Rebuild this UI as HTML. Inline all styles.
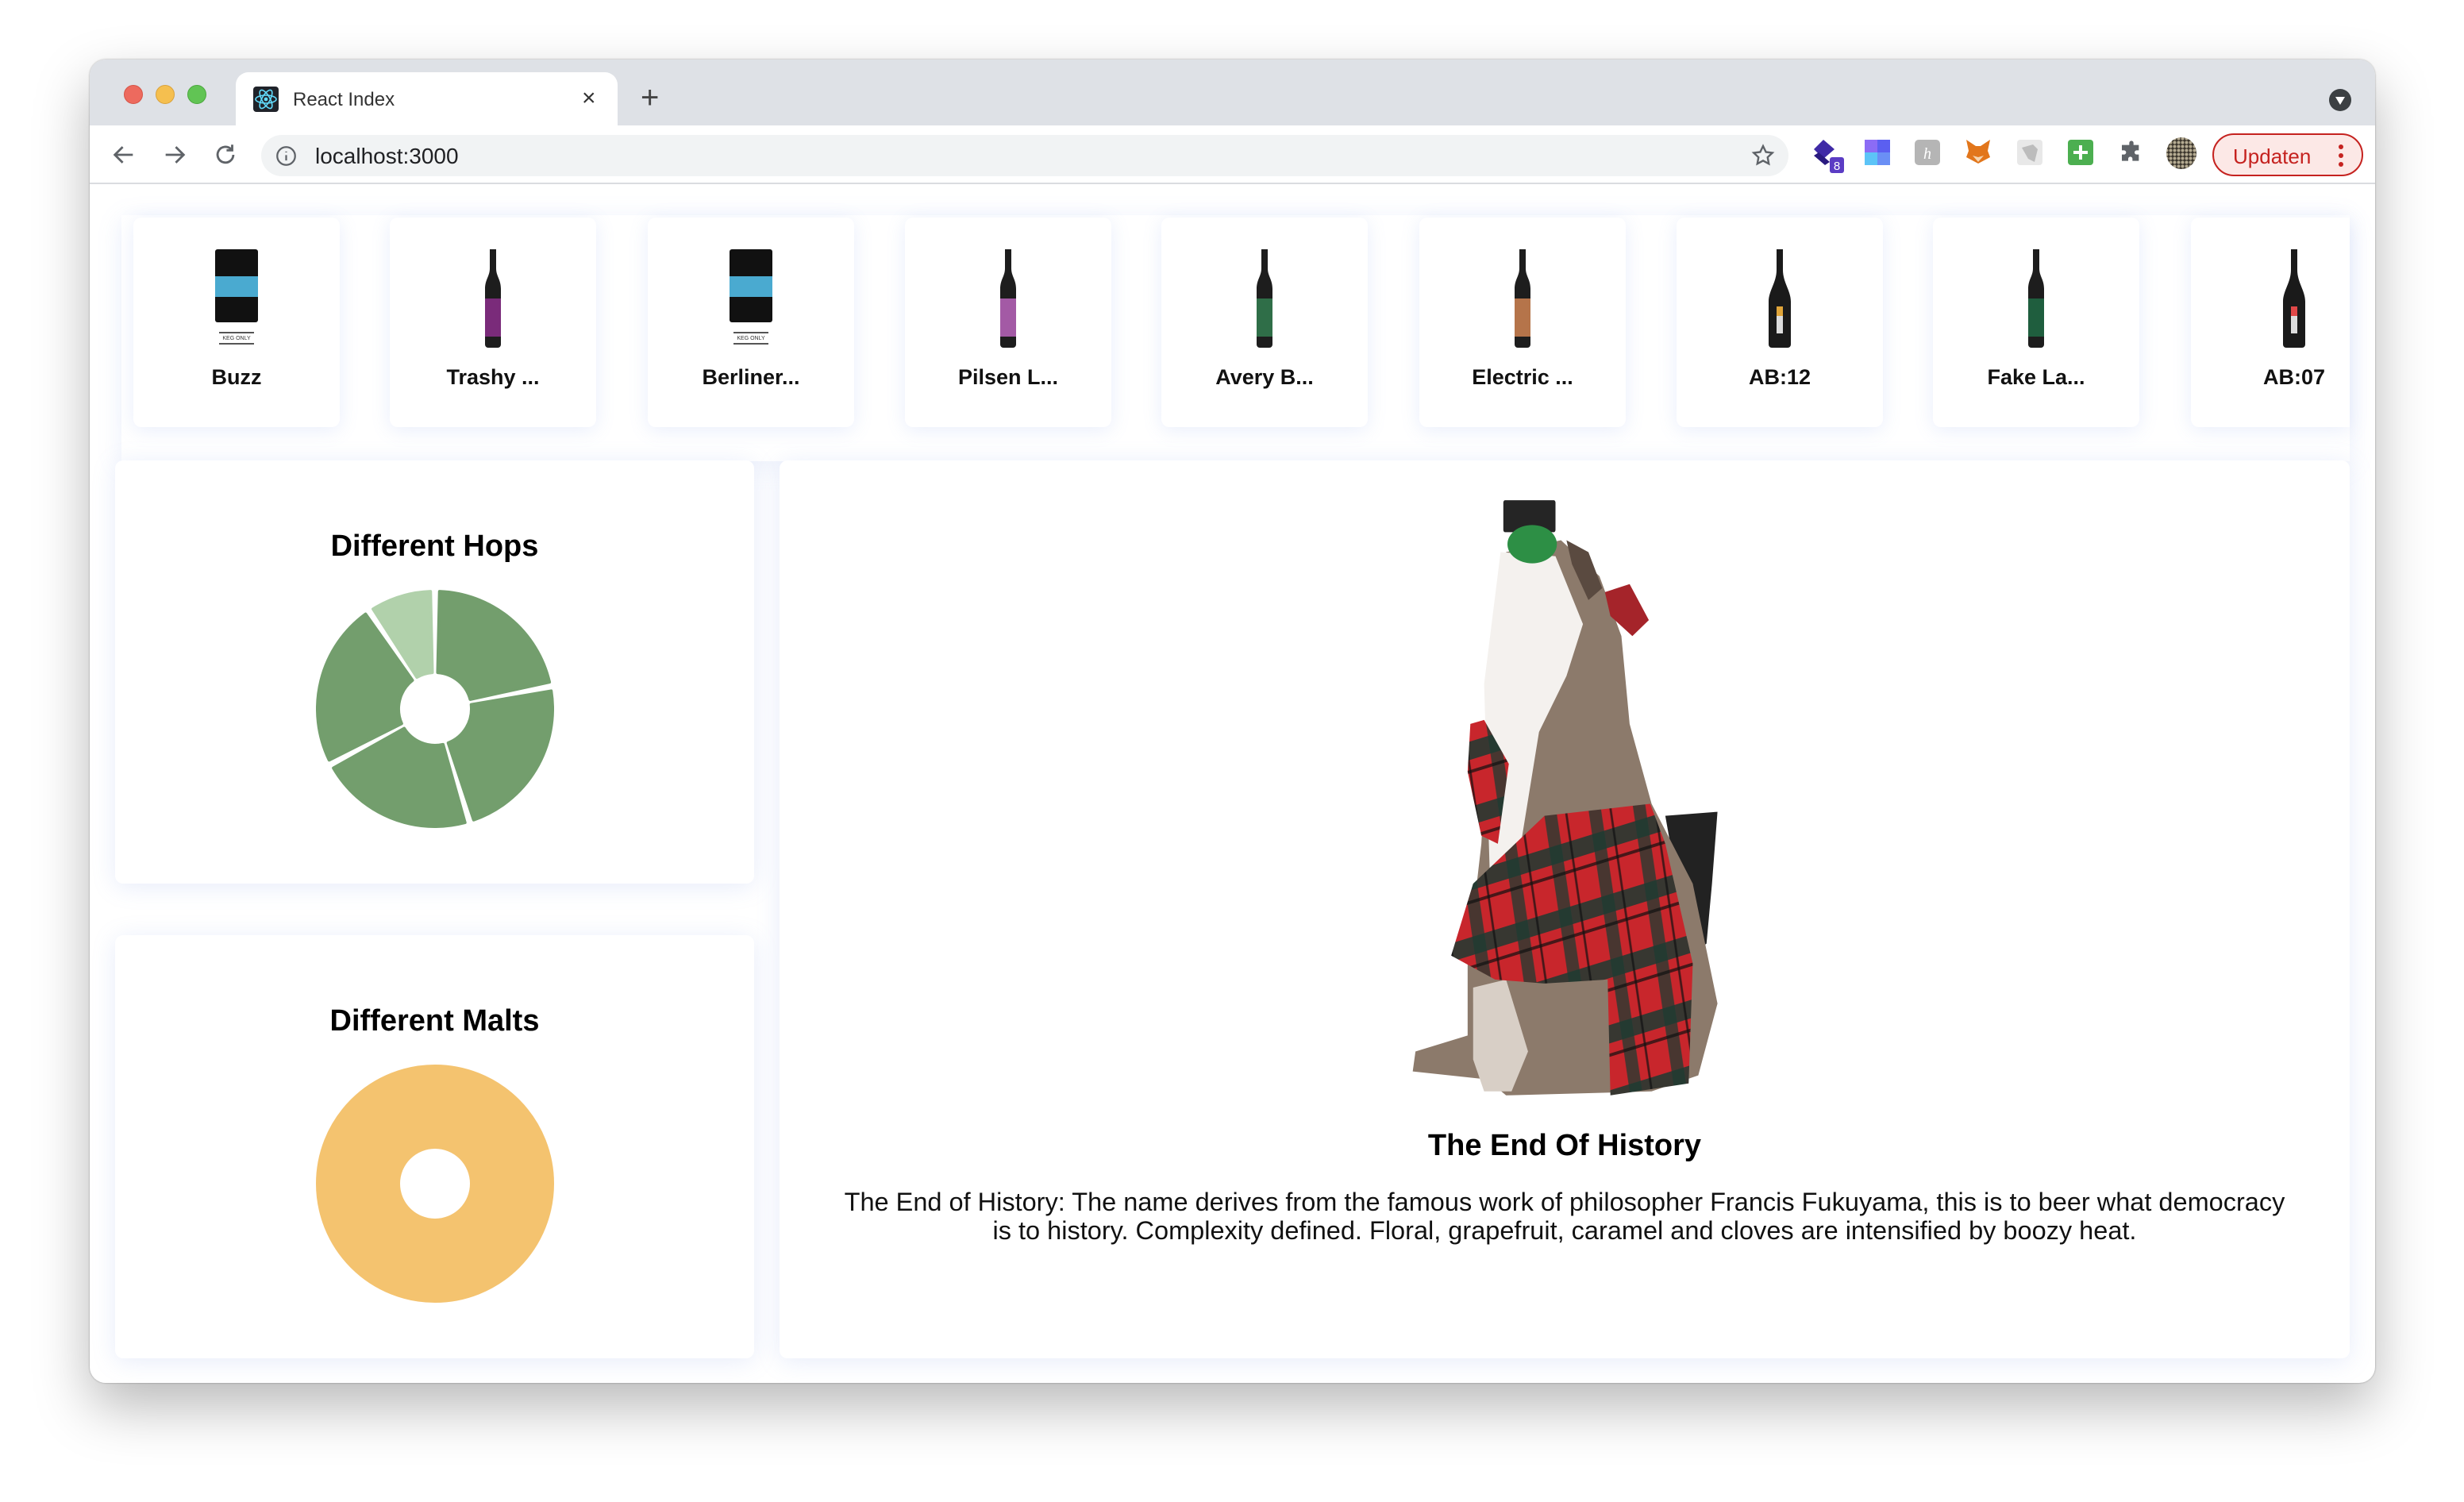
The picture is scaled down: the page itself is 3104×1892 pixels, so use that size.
<!DOCTYPE html>
<html><head><meta charset="utf-8">
<style>
*{margin:0;padding:0;box-sizing:border-box}
body{width:3104px;height:1892px;background:#fff;font-family:"Liberation Sans",Arial,sans-serif;position:relative;overflow:hidden}
.win{position:absolute;left:113px;top:75px;width:2879px;height:1667px;border-radius:20px;background:#fff;overflow:hidden;box-shadow:0 0 2px rgba(0,0,0,.35),0 30px 70px rgba(0,0,0,.28)}
.tabbar{position:absolute;left:0;top:0;width:100%;height:83px;background:#dee1e6}
.dot{position:absolute;top:32px;width:24px;height:24px;border-radius:50%}
.tab{position:absolute;left:184px;top:16px;width:481px;height:70px;background:#fff;border-radius:16px 16px 0 0}
.toolbar{position:absolute;left:0;top:83px;width:100%;height:74px;background:#fff;border-bottom:2px solid #dadce0}
.addr{position:absolute;left:216px;top:12px;width:1924px;height:52px;border-radius:26px;background:#f1f3f4}
.abs{position:absolute}
.strip{position:absolute;left:40px;top:196px;width:2807px;height:310px;box-shadow:0 6px 30px rgba(120,150,230,.14)}
.card{position:absolute;top:199px;width:260px;height:264px;background:#fff;border-radius:10px;box-shadow:0 4px 24px rgba(120,150,230,.16)}
.card svg{position:absolute;left:100px;top:40px}
.card span{position:absolute;left:0;width:100%;top:186px;text-align:center;font-weight:bold;font-size:27px;color:#111}
.panel{position:absolute;background:#fff;border-radius:10px;box-shadow:0 4px 30px rgba(120,150,230,.18)}
.ptitle{position:absolute;left:0;width:100%;text-align:center;font-weight:bold;font-size:38px;color:#000}
</style></head><body>
<div class="win">
 <div class="tabbar">
  <div class="dot" style="left:43px;background:#ed6a5e;border:1px solid #d55447"></div>
  <div class="dot" style="left:83px;background:#f5bf4f;border:1px solid #d9a23c"></div>
  <div class="dot" style="left:123px;background:#61c454;border:1px solid #4ca83f"></div>
  <div class="tab">
   <svg class="abs" style="left:22px;top:18px" width="32" height="32" viewBox="0 0 32 32"><rect width="32" height="32" rx="4" fill="#20232a"/><g fill="none" stroke="#61dafb" stroke-width="1.6"><ellipse cx="16" cy="16" rx="13" ry="5"/><ellipse cx="16" cy="16" rx="13" ry="5" transform="rotate(60 16 16)"/><ellipse cx="16" cy="16" rx="13" ry="5" transform="rotate(120 16 16)"/></g><circle cx="16" cy="16" r="2.4" fill="#61dafb"/></svg>
   <div class="abs" style="left:72px;top:21px;font-size:24px;color:#333">React Index</div>
   <div class="abs" style="left:436px;top:16px;font-size:30px;color:#333">×</div>
  </div>
  <div class="abs" style="left:694px;top:28px;font-size:40px;color:#444;line-height:40px">+</div>
  <svg class="abs" style="left:2821px;top:37px" width="28" height="28" viewBox="0 0 28 28"><circle cx="14" cy="14" r="14" fill="#3c4043"/><path d="M8 10h12l-6 10z" fill="#fff"/></svg>
 </div>
 <div class="toolbar">
  <svg class="abs" style="left:26px;top:20px" width="34" height="34" viewBox="0 0 24 24" fill="none" stroke="#5f6368" stroke-width="2"><path d="M20 12H5M11 5l-7 7 7 7"/></svg>
  <svg class="abs" style="left:90px;top:20px" width="34" height="34" viewBox="0 0 24 24" fill="none" stroke="#5f6368" stroke-width="2"><path d="M4 12h15M13 5l7 7-7 7"/></svg>
  <svg class="abs" style="left:154px;top:20px" width="34" height="34" viewBox="0 0 24 24" fill="none" stroke="#5f6368" stroke-width="2"><path d="M19 12a7 7 0 1 1-2-5"/><path d="M18 3v5h-5" fill="none"/></svg>
  <div class="addr">
   <svg class="abs" style="left:18px;top:13px" width="27" height="27" viewBox="0 0 24 24" fill="none" stroke="#5f6368" stroke-width="2"><circle cx="12" cy="12" r="10"/><path d="M12 11v6M12 7v1"/></svg>
   <div class="abs" style="left:68px;top:11px;font-size:28px;color:#202124">localhost:3000</div>
   <svg class="abs" style="left:1876px;top:10px" width="32" height="32" viewBox="0 0 24 24" fill="none" stroke="#5f6368" stroke-width="1.8"><path d="M12 3l2.7 5.6 6.1.8-4.5 4.2 1.1 6.1L12 16.8 6.6 19.7l1.1-6.1L3.2 9.4l6.1-.8z"/></svg>
  </div>
  <svg class="abs" style="left:2168px;top:14px" width="48" height="48" viewBox="0 0 48 48"><path d="M16 4l14 12-14 12L4 16z" fill="#3f2aa6"/><path d="M10 20l14 12-6 4L4 24z" fill="#2a1a80"/><rect x="24" y="26" width="18" height="20" rx="3" fill="#5b3cc4"/><text x="33" y="42" font-size="15" fill="#fff" text-anchor="middle" font-family="Liberation Sans">8</text></svg>
  <svg class="abs" style="left:2236px;top:18px" width="32" height="32" viewBox="0 0 32 32"><rect width="16" height="16" fill="#8b6cf5"/><rect x="16" width="16" height="16" fill="#5b5ff0"/><rect y="16" width="16" height="16" fill="#5cc4f7"/><rect x="16" y="16" width="16" height="16" fill="#6a8ff5"/></svg>
  <svg class="abs" style="left:2299px;top:18px" width="32" height="32" viewBox="0 0 32 32"><rect width="32" height="32" rx="5" fill="#b5b5b5"/><text x="16" y="24" font-size="20" fill="#fff" text-anchor="middle" font-family="Liberation Serif" font-style="italic">h</text></svg>
  <svg class="abs" style="left:2362px;top:16px" width="34" height="34" viewBox="0 0 34 34"><path d="M2 2l12 8h6l12-8-3 14 3 8-15 8L2 24l3-8z" fill="#e2761b"/><path d="M10 22l7 8 7-8-7 2z" fill="#f5d5b0"/></svg>
  <svg class="abs" style="left:2428px;top:18px" width="32" height="32" viewBox="0 0 32 32"><rect width="32" height="32" rx="4" fill="#e8e8e8"/><path d="M6 10l14-4 6 6-4 16-8-4z" fill="#bcbcbc"/></svg>
  <svg class="abs" style="left:2492px;top:18px" width="32" height="32" viewBox="0 0 32 32"><rect width="32" height="32" rx="4" fill="#4caf50"/><path d="M16 7v18M7 16h18" stroke="#fff" stroke-width="4"/></svg>
  <svg class="abs" style="left:2556px;top:18px" width="32" height="32" viewBox="0 0 24 24"><path d="M10 3a2 2 0 0 1 4 0v2h5v5h-2a2 2 0 0 0 0 4h2v6h-6v-2a2 2 0 0 0-4 0v2H3v-6h2a2 2 0 0 0 0-4H3V5h7z" fill="#5f6368"/></svg>
  <svg class="abs" style="left:2614px;top:14px" width="42" height="42" viewBox="0 0 42 42"><defs><pattern id="bb" width="5" height="5" patternUnits="userSpaceOnUse"><rect width="5" height="5" fill="#3a352c"/><circle cx="2.5" cy="2.5" r="2" fill="#b5ab92"/></pattern></defs><ellipse cx="21" cy="21" rx="19" ry="20" fill="url(#bb)"/></svg>
  <div class="abs" style="left:2674px;top:10px;width:190px;height:54px;border:2px solid #c5221f;border-radius:27px;background:#fce8e6">
   <div class="abs" style="left:24px;top:12px;font-size:26px;color:#c5221f">Updaten</div>
   <svg class="abs" style="left:156px;top:11px" width="8" height="30" viewBox="0 0 8 30"><circle cx="4" cy="4" r="3" fill="#c5221f"/><circle cx="4" cy="15" r="3" fill="#c5221f"/><circle cx="4" cy="26" r="3" fill="#c5221f"/></svg>
  </div>
 </div>

 <div class="strip"></div>
 <div class="card" style="left:55px"><svg width="60" height="124" viewBox="0 0 60 124"><rect x="3" y="0" width="54" height="92" rx="3" fill="#111"/><rect x="3" y="34" width="54" height="26" fill="#4aaad0"/><rect x="8" y="104" width="44" height="2" fill="#555"/><text x="30" y="114" font-size="7" text-anchor="middle" fill="#333" font-family="Liberation Sans">KEG ONLY</text><rect x="8" y="118" width="44" height="2" fill="#555"/></svg><span>Buzz</span></div>
 <div class="card" style="left:378px"><svg width="60" height="124" viewBox="0 0 60 124"><path d="M26 0h8v24c0 10 6 14 6 26v70a4 4 0 0 1-4 4H24a4 4 0 0 1-4-4V50c0-12 6-16 6-26z" fill="#1d1d1d"/><rect x="20" y="62" width="20" height="48" fill="#7a2b7a"/></svg><span>Trashy ...</span></div>
 <div class="card" style="left:703px"><svg width="60" height="124" viewBox="0 0 60 124"><rect x="3" y="0" width="54" height="92" rx="3" fill="#111"/><rect x="3" y="34" width="54" height="26" fill="#4aaad0"/><rect x="8" y="104" width="44" height="2" fill="#555"/><text x="30" y="114" font-size="7" text-anchor="middle" fill="#333" font-family="Liberation Sans">KEG ONLY</text><rect x="8" y="118" width="44" height="2" fill="#555"/></svg><span>Berliner...</span></div>
 <div class="card" style="left:1027px"><svg width="60" height="124" viewBox="0 0 60 124"><path d="M26 0h8v24c0 10 6 14 6 26v70a4 4 0 0 1-4 4H24a4 4 0 0 1-4-4V50c0-12 6-16 6-26z" fill="#1d1d1d"/><rect x="20" y="62" width="20" height="48" fill="#a35aa5"/></svg><span>Pilsen L...</span></div>
 <div class="card" style="left:1350px"><svg width="60" height="124" viewBox="0 0 60 124"><path d="M26 0h8v24c0 10 6 14 6 26v70a4 4 0 0 1-4 4H24a4 4 0 0 1-4-4V50c0-12 6-16 6-26z" fill="#1d1d1d"/><rect x="20" y="62" width="20" height="48" fill="#2f6e48"/></svg><span>Avery B...</span></div>
 <div class="card" style="left:1675px"><svg width="60" height="124" viewBox="0 0 60 124"><path d="M26 0h8v24c0 10 6 14 6 26v70a4 4 0 0 1-4 4H24a4 4 0 0 1-4-4V50c0-12 6-16 6-26z" fill="#1d1d1d"/><rect x="20" y="62" width="20" height="48" fill="#b5744a"/></svg><span>Electric ...</span></div>
 <div class="card" style="left:1999px"><svg width="60" height="124" viewBox="0 0 60 124"><path d="M26 0h8v26c0 16 10 26 10 40v54a4 4 0 0 1-4 4H20a4 4 0 0 1-4-4V66c0-14 10-24 10-40z" fill="#1a1a1a"/><rect x="26" y="72" width="8" height="12" fill="#e0a53a"/><rect x="26" y="84" width="8" height="22" fill="#ddd"/></svg><span>AB:12</span></div>
 <div class="card" style="left:2322px"><svg width="60" height="124" viewBox="0 0 60 124"><path d="M26 0h8v24c0 10 6 14 6 26v70a4 4 0 0 1-4 4H24a4 4 0 0 1-4-4V50c0-12 6-16 6-26z" fill="#1d1d1d"/><rect x="20" y="62" width="20" height="48" fill="#1f5e3e"/></svg><span>Fake La...</span></div>
 <div class="card" style="left:2647px;width:200px;border-radius:10px 0 0 10px"><svg width="60" height="124" viewBox="0 0 60 124"><path d="M26 0h8v26c0 16 10 26 10 40v54a4 4 0 0 1-4 4H20a4 4 0 0 1-4-4V66c0-14 10-24 10-40z" fill="#1a1a1a"/><rect x="26" y="72" width="8" height="12" fill="#e04848"/><rect x="26" y="84" width="8" height="22" fill="#ddd"/></svg><span style="width:260px">AB:07</span></div>

 <div class="panel" style="left:32px;top:505px;width:805px;height:533px">
  <div class="ptitle" style="top:87px">Different Hops</div>
  <svg class="abs" style="left:253px;top:163px" width="300" height="300" viewBox="-150 -150 300 300" id="hops"></svg>
 </div>
 <div class="panel" style="left:32px;top:1103px;width:805px;height:533px">
  <div class="ptitle" style="top:87px">Different Malts</div>
  <svg class="abs" style="left:253px;top:163px" width="300" height="300" viewBox="-150 -150 300 300"><circle r="97" fill="none" stroke="#f4c36f" stroke-width="106"/></svg>
 </div>
 <div class="panel" style="left:869px;top:505px;width:1978px;height:1131px">
  <svg class="abs" style="left:770px;top:30px" width="460" height="800" viewBox="0 0 1330 1590" preserveAspectRatio="none">
   <defs><pattern id="plaid" width="160" height="160" patternUnits="userSpaceOnUse" patternTransform="rotate(-12)">
    <rect width="160" height="160" fill="#c8262c"/>
    <rect x="0" y="50" width="160" height="45" fill="#1d3a31" opacity=".85"/>
    <rect x="55" y="0" width="45" height="160" fill="#1d3a31" opacity=".75"/>
    <rect x="0" y="120" width="160" height="8" fill="#111" opacity=".7"/>
    <rect x="130" y="0" width="8" height="160" fill="#111" opacity=".7"/>
   </pattern></defs>
   <path d="M1000 830 L1190 820 L1170 1000 L1150 1150 L1090 1180 Z" fill="#222"/>
   <path d="M420 170 L620 140 L760 230 L840 380 L870 600 L950 800 L1100 1000 L1190 1300 L1120 1480 L950 1520 L420 1530 L350 1490 L80 1470 L90 1420 L280 1380 L280 1200 L330 900 L360 500 Z" fill="#8c7a6b"/>
   <path d="M400 170 L600 180 L700 350 L640 480 L540 620 L460 960 L360 960 L340 500 Z" fill="#f4f1ee"/>
   <path d="M300 1260 L420 1240 L500 1420 L440 1520 L340 1520 L300 1440 Z" fill="#d8cfc6"/>
   <path d="M640 140 L720 170 L770 260 L720 290 L660 200 Z" fill="#5a4a40"/>
   <rect x="410" y="40" width="190" height="80" rx="6" fill="#252525"/>
   <ellipse cx="515" cy="150" rx="90" ry="48" fill="#2d8f45"/>
   <path d="M780 270 L870 250 L940 340 L880 380 L800 330 Z" fill="#a5242a"/>
   <path d="M290 600 L340 590 L430 700 L390 900 L330 880 L280 720 Z" fill="url(#plaid)"/>
   <path d="M220 1180 L300 1000 L560 830 L945 800 L1000 900 L1100 1200 L1085 1500 L800 1530 L790 1240 L560 1250 L380 1240 Z" fill="url(#plaid)"/>
  </svg>
  <div class="ptitle" style="top:842px">The End Of History</div>
  <div class="abs" style="left:0;width:100%;top:916px;text-align:center;font-size:32.5px;line-height:36px;color:#111">The End of History: The name derives from the famous work of philosopher Francis Fukuyama, this is to beer what democracy<br>is to history. Complexity defined. Floral, grapefruit, caramel and cloves are intensified by boozy heat.</div>
 </div>
</div>
<script>
(function(){
 var svg=document.getElementById('hops'),R=148,r=46,g=2.2;
 var segs=[[-34,0,'#b1d1ab'],[0,79,'#739e6d'],[79,163,'#739e6d'],[163,242,'#739e6d'],[242,326,'#739e6d']];
 function p(a,rad){a=(a-90)*Math.PI/180;return (rad*Math.cos(a)).toFixed(2)+' '+(rad*Math.sin(a)).toFixed(2);}
 var h='';
 segs.forEach(function(s){
  var a0=s[0]+g*150/R,a1=s[1]-g*150/R,b0=s[0]+g*150/r*0.6,b1=s[1]-g*150/r*0.6;
  var lg=(s[1]-s[0])>180?1:0;
  h+='<path d="M'+p(a0,R)+' A'+R+' '+R+' 0 '+lg+' 1 '+p(a1,R)+' L'+p(b1,r)+' A'+r+' '+r+' 0 '+lg+' 0 '+p(b0,r)+' Z" fill="'+s[2]+'" stroke="'+s[2]+'" stroke-width="4" stroke-linejoin="round"/>';
 });
 svg.innerHTML=h;
})();
</script>
</body></html>
